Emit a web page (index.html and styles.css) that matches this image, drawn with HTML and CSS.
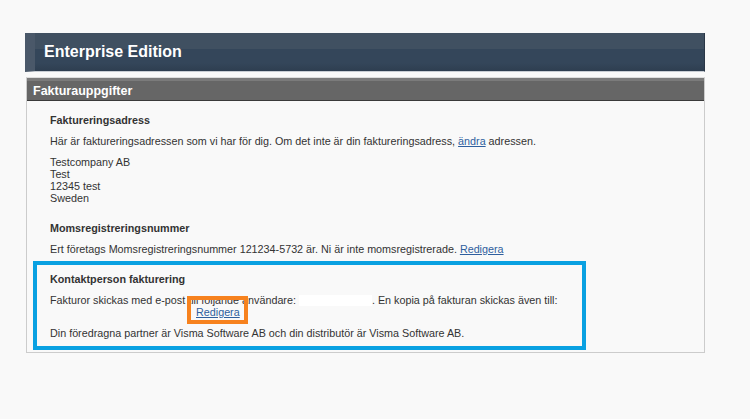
FILE: index.html
```html
<!DOCTYPE html>
<html lang="sv">
<head>
<meta charset="utf-8">
<title>Fakturauppgifter</title>
<link rel="stylesheet" href="styles.css">
</head>
<body>
<div class="page">
  <div class="edition-bar"><h1 class="edition-title">Enterprise Edition</h1></div>
  <div class="panel">
    <div class="panel-head">Fakturauppgifter</div>
    <div class="panel-body">
      <div class="section section-first">
        <h2 class="sec-title">Faktureringsadress</h2>
        <p class="sec-text">Här är faktureringsadressen som vi har för dig. Om det inte är din faktureringsadress, <a class="link" href="#">ändra</a> adressen.</p>
        <p class="address">Testcompany AB<br>Test<br>12345 test<br>Sweden</p>
      </div>
      <div class="section section-second">
        <h2 class="sec-title">Momsregistreringsnummer</h2>
        <p class="sec-text">Ert företags Momsregistreringsnummer 121234-5732 är. Ni är inte momsregistrerade. <a class="link" href="#">Redigera</a></p>
      </div>
      <div class="section section-boxed">
        <h2 class="sec-title">Kontaktperson fakturering</h2>
        <p class="sec-text sec-text-tight">Fakturor skickas med e-post till följande användare: <span class="redacted"></span>. En kopia på fakturan skickas även till:</p>
        <div class="edit-line"><a class="link edit-link" href="#">Redigera<span class="edit-mark"></span></a></div>
        <p class="sec-text">Din föredragna partner är Visma Software AB och din distributör är Visma Software AB.</p>
      </div>
    </div>
  </div>
</div>
</body>
</html>
```

FILE: styles.css
```css
html, body {
  margin: 0;
  padding: 0;
  background: #f9f9f9;
}
body {
  font-family: "Liberation Sans", Arial, sans-serif;
  font-size: 10.78px;
  line-height: 12px;
  color: #333333;
}
.page {
  width: 680px;
  margin-left: 25px;
  padding-top: 33px;
}
.edition-bar {
  height: 38px;
  display: flex;
  align-items: center;
  border-left: 10px solid #4a5869;
  border-right: 1px solid #2a3747;
  border-bottom: 1px solid #c9ced4;
  background: linear-gradient(to bottom, #405061 0, #405061 16px, #34465a 16px, #34465a 30px, #2e3e50 38px);
  margin-bottom: 5px;
}
.edition-title {
  margin: 0 0 0 9px;
  font-size: 16px;
  font-weight: bold;
  color: #ffffff;
  line-height: 20px;
}
.panel {
  margin-left: 1px;
  border: 1px solid #cccccc;
  border-top: 1px solid #dddddd;
}
.panel-head {
  height: 19px;
  padding-left: 6px;
  display: flex;
  align-items: center;
  background: linear-gradient(to bottom, #7b7b7b 0, #7b7b7b 3px, #666666 3px);
  border-bottom: 1px solid #3a3a3a;
  color: #ffffff;
  font-weight: bold;
  font-size: 12.5px;
  padding-top: 3px;
}
.panel-body {
  padding: 13px 0 2px 0;
}
.section {
  margin-left: 6px;
  padding: 0 16px 0 17px;
}
.section-first { margin-bottom: 18px; }
.section-second { margin-bottom: 6px; }
.section-boxed {
  width: 553px;
  box-sizing: border-box;
  border: 4px solid #0aa1e2;
  padding: 8px 12px 7px 13px;
}
.sec-title {
  margin: 0 0 9px 0;
  font-size: 10.78px;
  line-height: 12px;
  font-weight: bold;
  color: #333333;
}
.sec-text {
  margin: 0 0 9px 0;
}
.sec-text:last-child { margin-bottom: 0; }
.sec-text-tight { margin-bottom: 0; }
.address { margin: 0; }
.link {
  color: #2f5f9e;
  text-decoration: underline;
}
.redacted {
  display: inline-block;
  width: 73px;
  height: 11px;
  vertical-align: -2px;
  background: #ffffff;
}
.edit-line {
  padding-left: 146px;
  margin-bottom: 9px;
}
.edit-link {
  position: relative;
}
.edit-mark {
  position: absolute;
  left: -9px;
  right: -8px;
  top: -10px;
  bottom: -6px;
  border: 4px solid #f7821e;
  pointer-events: none;
}
```
